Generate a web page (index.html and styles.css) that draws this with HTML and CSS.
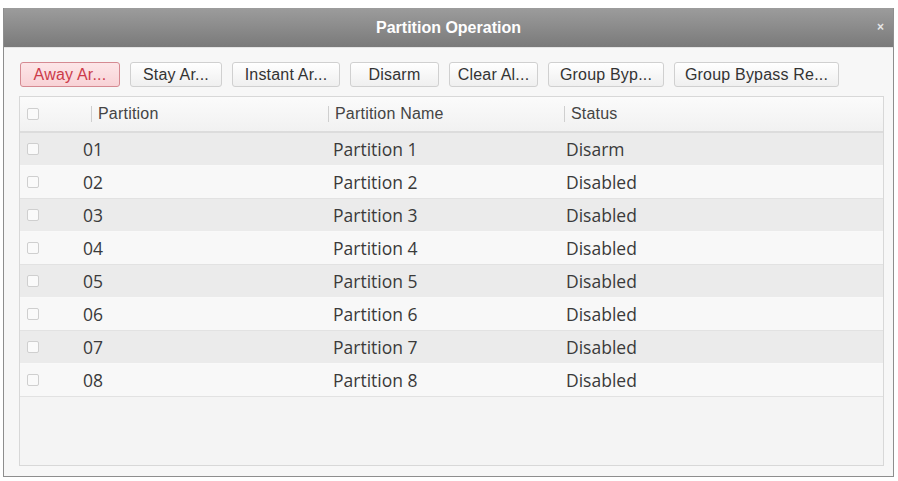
FILE: index.html
```html
<!DOCTYPE html>
<html lang="en">
<head>
  <meta charset="UTF-8">
  <title>Partition Operation</title>
  <link rel="stylesheet" href="styles.css">
</head>
<body class="partition-page">
  <div class="dialog">
    <div class="dialog-title">
      <span>Partition Operation</span>
      <span class="close-btn">&times;</span>
    </div>

    <div class="dialog-body">
      <div class="toolbar">
        <button class="op-btn active">Away Ar...</button>
        <button class="op-btn w-stay">Stay Ar...</button>
        <button class="op-btn w-instant">Instant Ar...</button>
        <button class="op-btn w-disarm">Disarm</button>
        <button class="op-btn w-clear">Clear Al...</button>
        <button class="op-btn w-group">Group Byp...</button>
        <button class="op-btn w-groupre">Group Bypass Re...</button>
      </div>

      <div class="grid">
        <div class="grid-head">
          <div class="cell check"><span class="box"></span></div>
          <div class="cell"><span class="sep"></span>Partition</div>
          <div class="cell"><span class="sep"></span>Partition Name</div>
          <div class="cell"><span class="sep"></span>Status</div>
          <div class="cell end"><span class="sep"></span></div>
        </div>

        <div class="grid-row">
          <div class="cell check"><span class="box"></span></div>
          <div class="cell num">01</div>
          <div class="cell">Partition 1</div>
          <div class="cell">Disarm</div>
        </div>
        <div class="grid-row">
          <div class="cell check"><span class="box"></span></div>
          <div class="cell num">02</div>
          <div class="cell">Partition 2</div>
          <div class="cell">Disabled</div>
        </div>
        <div class="grid-row">
          <div class="cell check"><span class="box"></span></div>
          <div class="cell num">03</div>
          <div class="cell">Partition 3</div>
          <div class="cell">Disabled</div>
        </div>
        <div class="grid-row">
          <div class="cell check"><span class="box"></span></div>
          <div class="cell num">04</div>
          <div class="cell">Partition 4</div>
          <div class="cell">Disabled</div>
        </div>
        <div class="grid-row">
          <div class="cell check"><span class="box"></span></div>
          <div class="cell num">05</div>
          <div class="cell">Partition 5</div>
          <div class="cell">Disabled</div>
        </div>
        <div class="grid-row">
          <div class="cell check"><span class="box"></span></div>
          <div class="cell num">06</div>
          <div class="cell">Partition 6</div>
          <div class="cell">Disabled</div>
        </div>
        <div class="grid-row">
          <div class="cell check"><span class="box"></span></div>
          <div class="cell num">07</div>
          <div class="cell">Partition 7</div>
          <div class="cell">Disabled</div>
        </div>
        <div class="grid-row">
          <div class="cell check"><span class="box"></span></div>
          <div class="cell num">08</div>
          <div class="cell">Partition 8</div>
          <div class="cell">Disabled</div>
        </div>
      </div>
    </div>
  </div>
</body>
</html>
```

FILE: styles.css
```css
body.partition-page {
  margin: 0;
  background: #ffffff;
  font-family: "Liberation Sans", Arial, sans-serif;
  padding: 8px 4px 4px 3px;
}

.dialog {
  height: 469px;
  border: 1px solid #8e8e8e;
  border-top: none;
  display: flex;
  flex-direction: column;
  background: #f7f7f7;
  box-sizing: border-box;
}

.dialog-title {
  height: 39px;
  flex: none;
  background: linear-gradient(to bottom, #9c9c9c, #7a7a7a);
  color: #ffffff;
  font-weight: bold;
  font-size: 16px;
  display: flex;
  align-items: center;
  justify-content: center;
  position: relative;
}

.close-btn {
  position: absolute;
  right: 9px;
  top: 12px;
  font-size: 12px;
  color: #e6e6e6;
}

.dialog-body {
  flex: 1;
  display: flex;
  flex-direction: column;
  padding: 14px 9px 10px 14px;
  border-top: 1px solid #e4e4e4;
}

/* operation buttons */
.toolbar {
  display: flex;
  gap: 10px;
  margin-left: 2px;
  margin-bottom: 9px;
}

.op-btn {
  height: 25px;
  padding: 0;
  font-family: "Liberation Sans", Arial, sans-serif;
  font-size: 16px;
  letter-spacing: 0.2px;
  color: #333333;
  background: linear-gradient(to bottom, #ffffff, #efefef);
  border: 1px solid #d0d0d0;
  border-radius: 3px;
  width: 92px;
}

.op-btn.active {
  width: 100px;
  color: #cc3b4a;
  background: linear-gradient(to bottom, #fde6e8, #f8d2d6);
  border-color: #d58a92;
}

.w-stay { width: 92px; }
.w-instant { width: 108px; }
.w-disarm { width: 89px; }
.w-clear { width: 89px; }
.w-group { width: 116px; }
.w-groupre { width: 165px; }

/* partition table */
.grid {
  flex: 1;
  border: 1px solid #d8d8d8;
  background: #f4f4f4;
  margin-left: 1px;
}

.grid-head,
.grid-row {
  display: grid;
  grid-template-columns: 71px 237px 236px 1fr;
  align-items: center;
}

.grid-head {
  height: 34px;
  grid-template-columns: 71px 237px 236px 1fr 4px;
  background: linear-gradient(to bottom, #fbfbfb, #f1f1f1);
  border-bottom: 2px solid #dcdcdc;
  font-size: 16px;
  letter-spacing: 0.2px;
  color: #444444;
}

.grid-row {
  height: 32px;
  font-family: "Open Sans", "Noto Sans", sans-serif;
  font-size: 17.5px;
  color: #3a3a3a;
}

.grid-row:nth-child(even) {
  background: #ebebeb;
  border-bottom: 1px solid #f9f9f9;
}

.grid-row:nth-child(odd) {
  background: #f8f8f8;
  border-bottom: 1px solid #e2e2e2;
}

.cell {
  display: flex;
  align-items: center;
  white-space: nowrap;
}

.cell.check {
  padding-left: 7px;
}

.cell.num {
  margin-left: -8px;
}

.grid-row .cell:nth-child(3) {
  margin-left: 5px;
}

.grid-row .cell:nth-child(4) {
  margin-left: 2px;
}

.sep {
  width: 1px;
  height: 16px;
  background: #cfcfcf;
  margin-right: 6px;
}

.box {
  width: 10px;
  height: 10px;
  border: 1px solid #cfcfcf;
  border-radius: 2px;
  background: #fafafa;
}
```
